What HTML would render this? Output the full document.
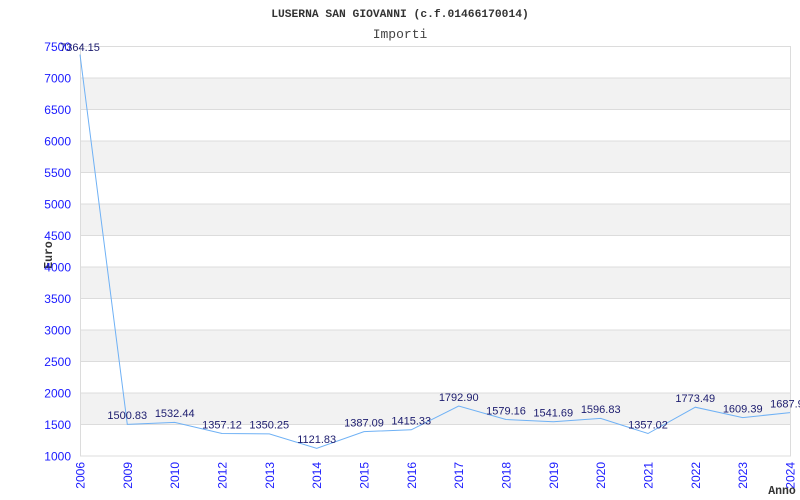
<!DOCTYPE html>
<html><head><meta charset="utf-8"><style>body{margin:0;background:#fff}svg{display:block}</style></head><body>
<svg width="800" height="500" xmlns="http://www.w3.org/2000/svg">
<rect width="800" height="500" fill="#fff"/>
<g fill="#f2f2f2">
<rect x="80" y="78" width="711" height="31.5"/>
<rect x="80" y="141" width="711" height="31.5"/>
<rect x="80" y="204" width="711" height="31.5"/>
<rect x="80" y="267" width="711" height="31.5"/>
<rect x="80" y="330" width="711" height="31.5"/>
<rect x="80" y="393" width="711" height="31.5"/>
</g>
<g stroke="#dcdcdc" stroke-width="1">
<line x1="80" y1="46.5" x2="791" y2="46.5"/><line x1="80" y1="78" x2="791" y2="78"/><line x1="80" y1="109.5" x2="791" y2="109.5"/><line x1="80" y1="141" x2="791" y2="141"/><line x1="80" y1="172.5" x2="791" y2="172.5"/><line x1="80" y1="204" x2="791" y2="204"/><line x1="80" y1="235.5" x2="791" y2="235.5"/><line x1="80" y1="267" x2="791" y2="267"/><line x1="80" y1="298.5" x2="791" y2="298.5"/><line x1="80" y1="330" x2="791" y2="330"/><line x1="80" y1="361.5" x2="791" y2="361.5"/><line x1="80" y1="393" x2="791" y2="393"/><line x1="80" y1="424.5" x2="791" y2="424.5"/><line x1="80" y1="456" x2="791" y2="456"/>
<line x1="80.5" y1="46" x2="80.5" y2="456"/><line x1="790.5" y1="46" x2="790.5" y2="456"/>
</g>
<g font-family="Liberation Mono, monospace" fill="#333" text-anchor="middle">
<text x="400" y="17" font-size="11.3" font-weight="bold">LUSERNA SAN GIOVANNI (c.f.01466170014)</text>
<text x="400" y="38" font-size="13" fill="#444">Importi</text>
<text x="782" y="494" font-size="11.5" font-weight="bold">Anno</text>
<text transform="translate(52,255) rotate(-90)" font-size="11.5" font-weight="bold">Euro</text>
</g>
<g font-family="Liberation Sans, sans-serif" font-size="12" fill="#1a1aff" text-anchor="end">
<text x="71" y="51">7500</text><text x="71" y="82.5">7000</text><text x="71" y="114">6500</text><text x="71" y="145.5">6000</text><text x="71" y="177">5500</text><text x="71" y="208.5">5000</text><text x="71" y="240">4500</text><text x="71" y="271.5">4000</text><text x="71" y="303">3500</text><text x="71" y="334.5">3000</text><text x="71" y="366">2500</text><text x="71" y="397.5">2000</text><text x="71" y="429">1500</text><text x="71" y="460.5">1000</text>
</g>
<g font-family="Liberation Sans, sans-serif" font-size="12" fill="#1a1aff" text-anchor="end">
<text transform="translate(84.5,462) rotate(-90)">2006</text>
<text transform="translate(131.8,462) rotate(-90)">2009</text>
<text transform="translate(179.2,462) rotate(-90)">2010</text>
<text transform="translate(226.5,462) rotate(-90)">2012</text>
<text transform="translate(273.8,462) rotate(-90)">2013</text>
<text transform="translate(321.2,462) rotate(-90)">2014</text>
<text transform="translate(368.5,462) rotate(-90)">2015</text>
<text transform="translate(415.8,462) rotate(-90)">2016</text>
<text transform="translate(463.2,462) rotate(-90)">2017</text>
<text transform="translate(510.5,462) rotate(-90)">2018</text>
<text transform="translate(557.8,462) rotate(-90)">2019</text>
<text transform="translate(605.2,462) rotate(-90)">2020</text>
<text transform="translate(652.5,462) rotate(-90)">2021</text>
<text transform="translate(699.8,462) rotate(-90)">2022</text>
<text transform="translate(747.2,462) rotate(-90)">2023</text>
<text transform="translate(794.5,462) rotate(-90)">2024</text>
</g>
<polyline fill="none" stroke="#6fb1f5" stroke-width="1" points="80,54.6 127.3,424.4 174.7,422.4 222,433.5 269.3,433.9 316.7,448.3 364,431.6 411.3,429.8 458.7,406 506,419.5 553.3,421.8 600.7,418.4 648,433.5 695.3,407.2 742.7,417.6 790,412.6"/>
<g font-family="Liberation Sans, sans-serif" font-size="11" fill="#1c1c6e" text-anchor="middle">
<text x="80" y="51">7364.15</text>
<text x="127.3" y="419">1500.83</text>
<text x="174.7" y="417">1532.44</text>
<text x="222" y="428.5">1357.12</text>
<text x="269.3" y="428.5">1350.25</text>
<text x="316.7" y="443">1121.83</text>
<text x="364" y="426.5">1387.09</text>
<text x="411.3" y="424.5">1415.33</text>
<text x="458.7" y="401">1792.90</text>
<text x="506" y="414.5">1579.16</text>
<text x="553.3" y="416.5">1541.69</text>
<text x="600.7" y="413">1596.83</text>
<text x="648" y="428.5">1357.02</text>
<text x="695.3" y="402">1773.49</text>
<text x="742.7" y="412.5">1609.39</text>
<text x="790" y="407.5">1687.90</text>
</g>
</svg>
</body></html>
